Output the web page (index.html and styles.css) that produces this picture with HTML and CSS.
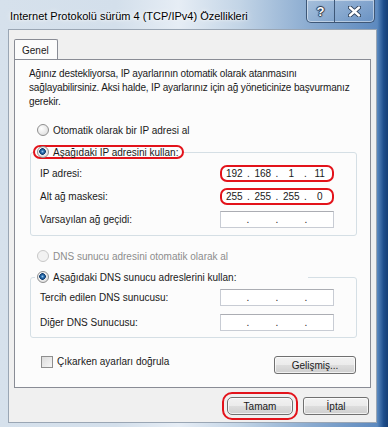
FILE: index.html
```html
<!DOCTYPE html>
<html lang="tr">
<head>
  <meta charset="UTF-8" />
  <title>Internet Protokolü sürüm 4 (TCP/IPv4) Özellikleri</title>
  <link rel="stylesheet" href="styles.css">
</head>
<body>
  <div class="window">
    <div class="titlebar">
      <span class="title">Internet Protokolü sürüm 4 (TCP/IPv4) Özellikleri</span>
      <div class="caption-btns">
        <span class="cap help">?</span>
        <span class="cap close">
          <svg width="13" height="11" viewBox="0 0 13 11">
            <path d="M2 1.5 L11 9.5 M11 1.5 L2 9.5" stroke="#2a3b52" stroke-width="4.2" stroke-linecap="round"/>
            <path d="M2 1.5 L11 9.5 M11 1.5 L2 9.5" stroke="#fff" stroke-width="2.4" stroke-linecap="round"/>
          </svg>
        </span>
      </div>
    </div>

    <div class="client">
      <div class="tabs"><span class="tab">Genel</span></div>

      <div class="panel">
        <p class="intro">Ağınız destekliyorsa, IP ayarlarının otomatik olarak atanmasını<br>
          sağlayabilirsiniz. Aksi halde, IP ayarlarınız için ağ yöneticinize başvurmanız<br>
          gerekir.</p>

        <label class="option first"><span class="radio"></span>Otomatik olarak bir IP adresi al</label>

        <fieldset class="group ip-group">
          <legend class="option marked"><span class="radio checked"></span>Aşağıdaki IP adresini kullan:</legend>
          <div class="row">
            <span>IP adresi:</span>
            <div class="ip marked"><span>192</span><i>.</i><span>168</span><i>.</i><span>1</span><i>.</i><span>11</span></div>
          </div>
          <div class="row">
            <span>Alt ağ maskesi:</span>
            <div class="ip marked"><span>255</span><i>.</i><span>255</span><i>.</i><span>255</span><i>.</i><span>0</span></div>
          </div>
          <div class="row">
            <span>Varsayılan ağ geçidi:</span>
            <div class="ip"><span></span><i>.</i><span></span><i>.</i><span></span><i>.</i><span></span></div>
          </div>
        </fieldset>

        <label class="option disabled dns-auto"><span class="radio"></span>DNS sunucu adresini otomatik olarak al</label>

        <fieldset class="group dns-group">
          <legend class="option wide"><span class="radio checked"></span>Aşağıdaki DNS sunucu adreslerini kullan:</legend>
          <div class="row">
            <span>Tercih edilen DNS sunucusu:</span>
            <div class="ip"><span></span><i>.</i><span></span><i>.</i><span></span><i>.</i><span></span></div>
          </div>
          <div class="row">
            <span>Diğer DNS Sunucusu:</span>
            <div class="ip"><span></span><i>.</i><span></span><i>.</i><span></span><i>.</i><span></span></div>
          </div>
        </fieldset>

        <div class="panel-foot">
          <label class="check"><span class="box"></span>Çıkarken ayarları doğrula</label>
          <button class="btn advanced">Gelişmiş...</button>
        </div>
      </div>

      <div class="dialog-buttons">
        <button class="btn ok">Tamam</button>
        <button class="btn">İptal</button>
      </div>
    </div>
  </div>
</body>
</html>
```

FILE: styles.css
```css
body {
  margin: 0;
  background: #fff;
  font-family: 'Liberation Sans', Arial, sans-serif;
  font-size: 10px;
  color: #1a1a1a;
}
.window {
  width: 388px;
  height: 427px;
  box-sizing: border-box;
  padding: 0 11px 4px 8px;
  display: flex;
  flex-direction: column;
  background:
    linear-gradient(90deg, #5d8cc2, #1f4f8d 60%, #163f76) right top / 11px 100% no-repeat,
    linear-gradient(90deg, #d6e1ec 0%, #d3dfeb 30%, #e6edf5 46%, #c2d4e6 62%, #8aabd0 80%, #5684bc 100%);
}
.titlebar {
  height: 30px;
  display: flex;
  align-items: flex-start;
  margin-right: -11px;
}
.title {
  margin: 10px 0 0 2px;
  font-size: 11px;
  color: #000;
  text-shadow: 0 0 6px #fff, 0 0 3px #fff;
}
.caption-btns {
  margin-left: auto;
  margin-right: 13px;
  height: 22px;
  display: flex;
  border: 1px solid #3e5777;
  border-top: none;
  border-radius: 0 0 5px 5px;
  box-shadow: inset 0 0 0 1px rgba(255, 255, 255, 0.45);
  background: linear-gradient(rgba(255, 255, 255, 0.22), rgba(255, 255, 255, 0.06));
}
.cap {
  display: flex;
  align-items: center;
  justify-content: center;
}
.help {
  width: 27px;
  border-right: 1px solid #3e5777;
  font-weight: bold;
  font-size: 13px;
  color: #fff;
  text-shadow: 0 0 1px #2a3b52, 1px 0 1px #2a3b52, -1px 0 1px #2a3b52, 0 1px 1px #2a3b52, 0 -1px 1px #2a3b52;
}
.close {
  width: 39px;
}

.client {
  flex: 1;
  background: #f0f0f0;
  border: 1px solid #9aa6b4;
  padding: 9px 5px 7px 5px;
  display: flex;
  flex-direction: column;
}
.tabs {
  display: flex;
  height: 20px;
  position: relative;
  z-index: 1;
}
.tab {
  width: 35px;
  padding-left: 7px;
  border: 1px solid #898c95;
  border-bottom: none;
  background: #fcfcfc;
  line-height: 21px;
  border-radius: 2px 2px 0 0;
}
.panel {
  flex: 1;
  background: #fcfcfc;
  border: 1px solid #898c95;
  padding: 7px 0 13px 0;
  display: flex;
  flex-direction: column;
}
.intro {
  margin: 0 0 0 14px;
  line-height: 14px;
  letter-spacing: -0.15px;
  white-space: nowrap;
}

.option {
  display: flex;
  align-items: center;
  height: 14px;
}
.option.first {
  margin: 14px 0 0 22px;
}
.option.disabled {
  color: #8d8d8d;
}
.dns-auto {
  margin: 13px 0 0 22px;
}
.radio {
  width: 10px;
  height: 10px;
  margin-right: 4px;
  border: 1px solid #8f8f8f;
  border-radius: 50%;
  background: radial-gradient(circle at 35% 35%, #fff, #e4e4e4 70%, #d0d0d0);
}
.radio.checked {
  background:
    radial-gradient(circle at 45% 45%, #9cc7ec 0, #2b70b0 1.5px, #0f3b6e 3px, transparent 3.6px),
    radial-gradient(circle at 35% 35%, #fff, #e4e4e4 70%, #d0d0d0);
}
.disabled .radio {
  border-color: #c8c8c8;
  background: #f2f2f2;
}

.group {
  margin: 8px 13px 0 15px;
  border: 1px solid #d5dfe5;
  border-radius: 3px;
  min-width: 0;
}
.ip-group {
  padding: 6px 22px 7px 9px;
}
.dns-group {
  margin-top: 7px;
  padding: 5px 22px 6px 9px;
}
.group legend {
  padding: 0 2px;
  margin-left: -5px;
  box-sizing: border-box;
}
.group legend.marked {
  margin-left: -7px;
  height: 14px;
  padding: 0 4px 0 2px;
  border: 2px solid #e3131b;
  border-radius: 7px;
}
.group legend.wide {
  width: 273px;
}
.row {
  display: flex;
  align-items: center;
  justify-content: space-between;
  height: 17px;
}
.ip-group .row + .row {
  margin-top: 6px;
}
.dns-group .row + .row {
  margin-top: 8px;
}
.ip {
  width: 114px;
  height: 17px;
  box-sizing: border-box;
  display: flex;
  align-items: center;
  background: #fff;
  border: 1px solid #c8ccd4;
  border-top-color: #abadb3;
}
.ip span {
  flex: 1;
  text-align: center;
}
.ip i {
  font-style: normal;
  width: 4px;
  text-align: center;
}
.ip.marked {
  border: 2px solid #e3131b;
  border-radius: 7px;
}

.panel-foot {
  display: flex;
  align-items: flex-start;
  justify-content: space-between;
  margin: 17px 14px 0 26px;
}
.check {
  display: flex;
  align-items: center;
  line-height: 13px;
}
.box {
  width: 10px;
  height: 10px;
  margin-right: 4px;
  border: 1px solid #8f8f8f;
  background: linear-gradient(135deg, #dcdcdc, #f6f6f6);
}

.btn {
  font-family: inherit;
  font-size: 10px;
  color: #1a1a1a;
  height: 18px;
  padding: 0;
  border: 1px solid #707070;
  border-radius: 3px;
  background: linear-gradient(#f2f2f2 0%, #ebebeb 50%, #dddddd 51%, #cfcfcf 100%);
  box-shadow: inset 0 0 0 1px rgba(255, 255, 255, 0.7);
}
.advanced {
  width: 82px;
  margin-top: 1px;
}
.dialog-buttons {
  display: flex;
  justify-content: flex-end;
  gap: 10px;
  margin-top: 9px;
  padding-right: 2px;
}
.dialog-buttons .btn {
  width: 66px;
}
.btn.ok {
  outline: 2px solid #e3131b;
  outline-offset: 3px;
  border-radius: 5px;
}
```
